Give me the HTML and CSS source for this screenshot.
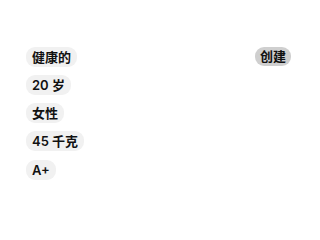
FILE: index.html
```html
<!DOCTYPE html>
<html lang="zh">
<head>
<meta charset="utf-8">
<link rel="stylesheet" href="styles.css">
</head>
<body>
<div class="screen">
  <div class="tags">
    <span class="tag">健康的</span>
    <span class="tag">20 岁</span>
    <span class="tag">女性</span>
    <span class="tag">45 千克</span>
    <span class="tag">A+</span>
  </div>
  <button class="create">创建</button>
</div>
</body>
</html>
```
FILE: styles.css
```css
html, body {
  margin: 0;
  padding: 0;
  background: #ffffff;
}
body {
  font-family: Inter, "Noto Sans CJK SC", sans-serif;
  color: #111;
}
.screen {
  display: flex;
  justify-content: space-between;
  align-items: flex-start;
  padding: 47px 29px 0 26px;
}
.tags {
  display: flex;
  flex-direction: column;
  align-items: flex-start;
  gap: 8px;
}
.tag {
  display: inline-flex;
  align-items: center;
  height: 20px;
  padding: 0 6px;
  border-radius: 9px;
  background: #f1f1f1;
  font-size: 13px;
  font-weight: 600;
  line-height: 20px;
}
.tag:last-child {
  margin-top: 1px;
}
.create {
  display: inline-flex;
  align-items: center;
  height: 19px;
  padding: 0 5px;
  border: none;
  border-radius: 9px;
  background: #cfcfcf;
  color: #111;
  font-family: Inter, "Noto Sans CJK SC", sans-serif;
  font-size: 13px;
  font-weight: 600;
  line-height: 19px;
}
```
